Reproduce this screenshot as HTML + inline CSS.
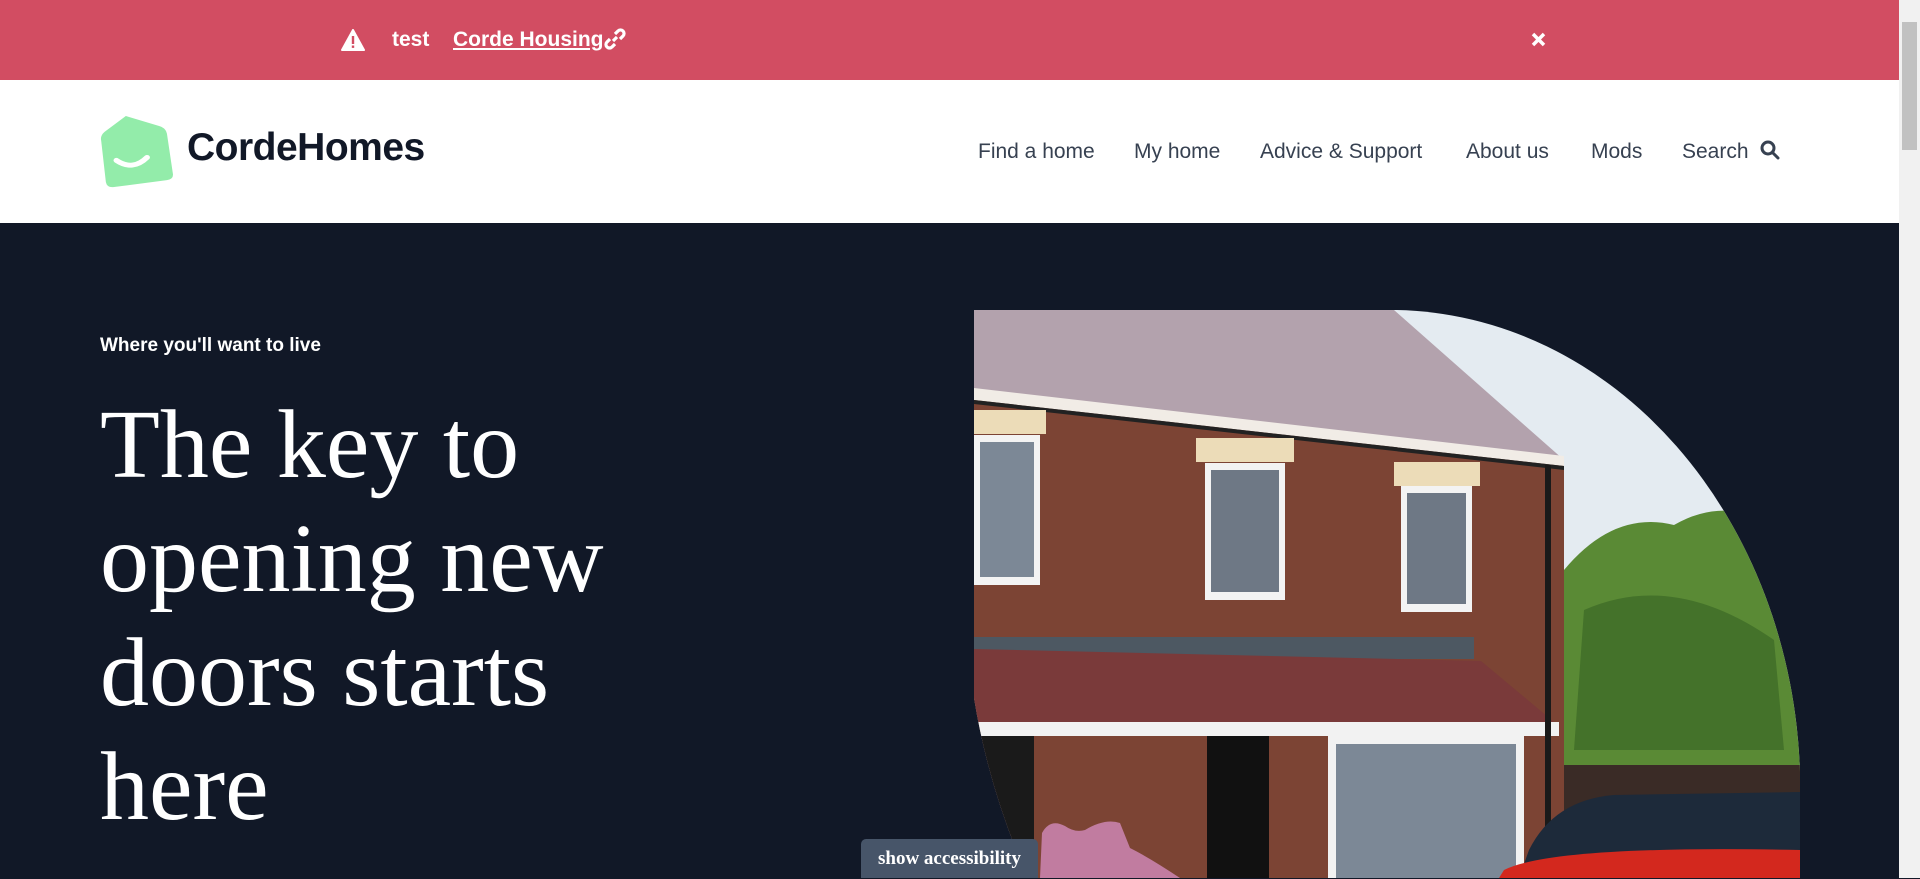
<!DOCTYPE html>
<html><head><meta charset="utf-8"><style>
*{margin:0;padding:0;box-sizing:border-box}
body{width:1920px;height:878px;overflow:hidden;background:#111827;font-family:"Liberation Sans",sans-serif;position:relative}
.banner{position:absolute;left:0;top:0;width:1899px;height:80px;background:#d24d62;color:#fff;font-weight:bold;font-size:21px}
.banner span{position:absolute;top:28px}
.header{position:absolute;left:0;top:80px;width:1899px;height:143px;background:#fff}
.nav{position:absolute;top:60px;font-size:21px;color:#374151}
.hero{position:absolute;left:0;top:223px;width:1899px;height:655px;background:#111827}
.sb{position:absolute;right:0;top:0;width:21px;height:878px;background:#f1f1f1}
.sb div{position:absolute;left:3px;top:22px;width:15px;height:128px;background:#c1c1c1}
h1{position:absolute;left:100px;top:388px;font-family:"Liberation Serif",serif;font-weight:normal;font-size:98px;line-height:114px;color:#fff;width:560px}
</style></head><body>
<div class="banner">
<svg style="position:absolute;left:341px;top:29px" width="24" height="22" viewBox="0 0 24 22"><path d="M12 1 L23 21 H1 Z" fill="#fff" stroke="#fff" stroke-width="2" stroke-linejoin="round"/><rect x="10.8" y="7" width="2.4" height="8" fill="#d24d62"/><rect x="10.8" y="16.5" width="2.4" height="2.4" fill="#d24d62"/></svg>
<span style="left:392px">test</span>
<span style="left:453px;text-decoration:underline">Corde Housing</span>
<svg style="position:absolute;left:604px;top:28px" width="22" height="22" viewBox="0 0 22 22" fill="none" stroke="#fff" stroke-width="3.2"><path d="M9 13 L13 9"/><path d="M11 6 L14 3 a3.5 3.5 0 0 1 5 5 L16 11"/><path d="M11 16 L8 19 a3.5 3.5 0 0 1 -5 -5 L6 11"/></svg>
<svg style="position:absolute;left:1531px;top:32px" width="15" height="15" viewBox="0 0 15 15" stroke="#fff" stroke-width="3.5"><path d="M2 2L13 13M13 2L2 13"/></svg>
</div>
<div class="header">
<svg style="position:absolute;left:100px;top:36px" width="74" height="72" viewBox="0 0 63 73" preserveAspectRatio="none"><path d="M22 0 L50 10 Q56 12 57 18 L62 58 Q63 64 57 65 L12 72 Q6 73 5 67 L1 25 Q0 20 4 16 Z" fill="#93ecaa"/><path d="M14 45 Q28 56 40 42" fill="none" stroke="#fff" stroke-width="5" stroke-linecap="round"/></svg>
<div style="position:absolute;left:187px;top:46px;font-size:39px;font-weight:bold;color:#111827;letter-spacing:-0.5px">CordeHomes</div>
<div class="nav" style="left:978px">Find a home</div>
<div class="nav" style="left:1134px">My home</div>
<div class="nav" style="left:1260px">Advice &amp; Support</div>
<div class="nav" style="left:1466px">About us</div>
<div class="nav" style="left:1591px">Mods</div>
<div class="nav" style="left:1682px">Search</div>
<svg style="position:absolute;left:1760px;top:60px" width="20" height="20" viewBox="0 0 20 20" fill="none" stroke="#374151" stroke-width="3"><circle cx="8" cy="8" r="6"/><path d="M12.5 12.5L18 18" stroke-linecap="round"/></svg>
</div>
<div class="hero">
<div style="position:absolute;left:100px;top:112px;color:#fff;font-weight:bold;font-size:19px">Where you'll want to live</div>
</div>
<h1>The key to opening new doors starts here</h1>
<svg style="position:absolute;left:974px;top:310px" width="826" height="568" viewBox="0 0 826 568">
<defs><clipPath id="c"><path d="M0 0 H421 A410 480 0 0 1 826 462 V568 H54 Q15 480 0 388 Z"/></clipPath></defs>
<g clip-path="url(#c)">
<rect width="826" height="568" fill="#e4ebf1"/>
<path d="M590 260 Q640 200 700 215 Q760 180 826 230 V470 H588 Z" fill="#5a8a35"/>
<path d="M610 300 Q700 260 800 330 L810 440 H600 Z" fill="#44722a"/>
<rect x="588" y="455" width="238" height="113" fill="#3a2b26"/>
<path d="M0 0 H420 L590 150 L0 82 Z" fill="#b3a2ad"/>
<path d="M0 82 L590 150 V568 H0 Z" fill="#7c4434"/>
<path d="M0 78 L590 146 V156 L0 90 Z" fill="#f1ece6"/>
<path d="M0 90 L590 156 V160 L0 94 Z" fill="#222"/>
<rect x="0" y="100" width="72" height="24" fill="#ecdcb8"/>
<rect x="0" y="125" width="66" height="150" fill="#f3f3f3"/>
<rect x="6" y="132" width="54" height="135" fill="#7c8896"/>
<rect x="222" y="128" width="98" height="24" fill="#ecdcb8"/>
<rect x="231" y="153" width="80" height="137" fill="#f3f3f3"/>
<rect x="237" y="160" width="68" height="122" fill="#6e7885"/>
<rect x="420" y="152" width="86" height="24" fill="#ecdcb8"/>
<rect x="427" y="176" width="71" height="126" fill="#f3f3f3"/>
<rect x="433" y="183" width="59" height="111" fill="#6e7885"/>
<rect x="0" y="327" width="500" height="22" fill="#4d5862"/>
<path d="M0 339 L507 351 L580 412 L0 412 Z" fill="#7a3a3a"/>
<rect x="0" y="412" width="585" height="14" fill="#f2f2f2"/>
<rect x="0" y="426" width="60" height="142" fill="#1a1a1a"/>
<rect x="233" y="426" width="62" height="142" fill="#111"/>
<rect x="354" y="426" width="196" height="142" fill="#f2f2f2"/>
<rect x="362" y="434" width="180" height="134" fill="#7c8896"/>
<rect x="571" y="155" width="6" height="413" fill="#1a1a1a"/>
<path d="M555 540 Q580 490 640 485 L826 482 V568 H545 Z" fill="#1d2a3a"/>
<path d="M530 560 Q580 535 826 540 V568 H525 Z" fill="#d3281e"/>
</g>
</svg>
<svg style="position:absolute;left:1030px;top:818px" width="160" height="60" viewBox="0 0 160 60"><path d="M10 60 L12 15 Q20 0 35 8 Q45 15 55 12 Q75 0 90 5 L100 30 Q120 40 150 60 Z" fill="#c17ca0"/></svg>
<div style="position:absolute;left:861px;top:839px;width:177px;height:39px;background:#475569;border-radius:5px 5px 0 0;color:#fff;font-family:'Liberation Serif',serif;font-weight:bold;font-size:19px;text-align:center;line-height:40px">show accessibility</div>
<div class="sb"><div></div></div>
</body></html>
